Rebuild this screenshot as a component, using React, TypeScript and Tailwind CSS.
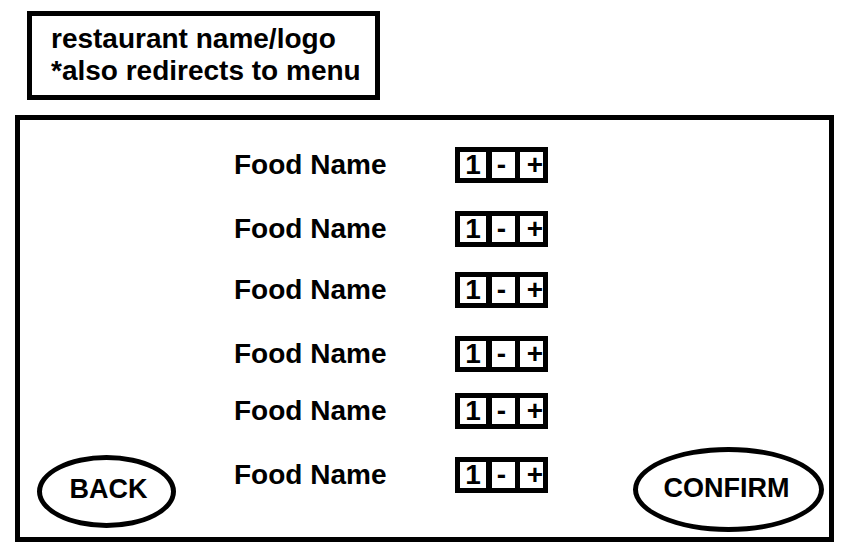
import { useState } from "react";

const groups = [
  { spacing: "", items: [1, 2] },
  { spacing: "mt-[25px]", items: [3, 4] },
  { spacing: "mt-[21px]", items: [5, 6] },
];

function FoodRow({ id }: { id: number }) {
  const [quantity, setQuantity] = useState(1);
  const labelId = `food-${id}`;

  return (
    <li className="flex h-9 items-center justify-between">
      <span id={labelId}>Food Name</span>
      <div
        role="group"
        aria-labelledby={labelId}
        className="flex h-9 border-[5px] border-black"
      >
        <output className="flex w-8 items-center justify-center border-r-[6px] border-black">
          {quantity}
        </output>
        <button
          type="button"
          aria-label="Decrease quantity"
          onClick={() => setQuantity(Math.max(0, quantity - 1))}
          className="flex w-7 items-center justify-center border-r-[5px] border-black pr-1"
        >
          -
        </button>
        <button
          type="button"
          aria-label="Increase quantity"
          onClick={() => setQuantity(quantity + 1)}
          className="flex w-[23px] items-center justify-end"
        >
          +
        </button>
      </div>
    </li>
  );
}

export default function App() {
  return (
    <div className="bg-white py-[11px] pr-6 pl-[15px] font-['Liberation_Sans',Arial,sans-serif] text-[28px] leading-8 font-bold text-black">
      <header className="flex pl-3">
        <a
          href="#menu"
          className="w-[353px] border-[5px] border-black pt-[7px] pb-2 pl-[19px] whitespace-nowrap"
        >
          restaurant name/logo
          <br />
          *also redirects to menu
        </a>
      </header>

      <main className="mt-[15px] flex items-end justify-between border-[5px] border-black pr-[5px] pl-[17px]">
        <button
          type="button"
          className="mb-[9px] h-[73px] w-[139px] rounded-[50%] border-[5px] border-black pb-1.5 pl-1 text-[27px]"
        >
          BACK
        </button>

        <div className="pt-[27px] pr-[27px] pb-11">
          {groups.map((group) => (
            <ul
              key={group.items[0]}
              className={`flex w-[314px] flex-col gap-7 ${group.spacing}`}
            >
              {group.items.map((id) => (
                <FoodRow key={id} id={id} />
              ))}
            </ul>
          ))}
        </div>

        <button
          type="button"
          className="mb-[5px] h-[85px] w-[191px] rounded-[50%] border-[5px] border-black pr-1 pb-1 text-[27px]"
        >
          CONFIRM
        </button>
      </main>
    </div>
  );
}
